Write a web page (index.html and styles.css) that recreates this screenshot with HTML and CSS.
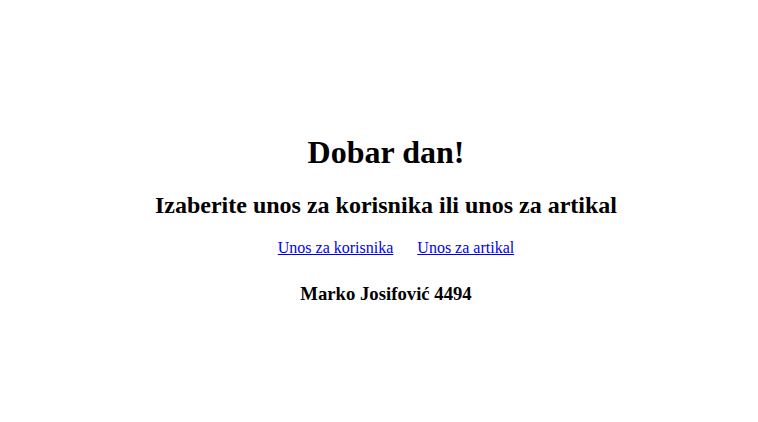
FILE: index.html
```html
<!DOCTYPE html>
<html lang="sr">
<head>
<meta charset="utf-8">
<title>Dobar dan</title>
<link rel="stylesheet" href="styles.css">
</head>
<body>
<main class="page">
  <h1 class="title">Dobar dan!</h1>
  <h2 class="subtitle">Izaberite unos za korisnika ili unos za artikal</h2>
  <nav class="links">
    <a href="#">Unos za korisnika</a>
    <a href="#">Unos za artikal</a>
  </nav>
  <h3 class="author">Marko Josifović 4494</h3>
</main>
</body>
</html>
```

FILE: styles.css
```css
html, body {
  margin: 0;
  padding: 0;
}
body {
  font-family: "Liberation Serif", "Times New Roman", serif;
  color: #000;
  background: #fff;
}
.page {
  box-sizing: border-box;
  height: 100vh;
  padding: 16px 0 0 14px;
  display: flex;
  flex-direction: column;
  align-items: center;
  justify-content: center;
  text-align: center;
}
.title {
  font-size: 32px;
  margin: 0 0 21px;
}
.subtitle {
  font-size: 24px;
  margin: 0 0 20px;
}
.links {
  display: flex;
  gap: 24px;
  padding-left: 20px;
  font-size: 16px;
  margin: 0 0 26px;
}
.links a {
  color: #0000ee;
}
.author {
  font-size: 18.72px;
  margin: 0;
}
```
